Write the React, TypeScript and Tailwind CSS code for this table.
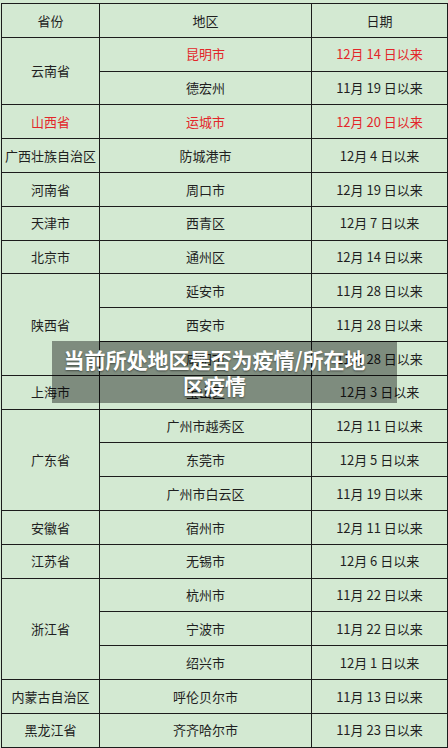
type Row = {
  province?: string;
  span?: number;
  provinceRed?: boolean;
  area: string;
  date: string;
  red?: boolean;
};

const ROWS: Row[] = [
  { province: "云南省", span: 2, area: "昆明市", date: "12月 14 日以来", red: true },
  { area: "德宏州", date: "11月 19 日以来" },
  { province: "山西省", provinceRed: true, area: "运城市", date: "12月 20 日以来", red: true },
  { province: "广西壮族自治区", area: "防城港市", date: "12月 4 日以来" },
  { province: "河南省", area: "周口市", date: "12月 19 日以来" },
  { province: "天津市", area: "西青区", date: "12月 7 日以来" },
  { province: "北京市", area: "通州区", date: "12月 14 日以来" },
  { province: "陕西省", span: 3, area: "延安市", date: "11月 28 日以来" },
  { area: "西安市", date: "11月 28 日以来" },
  { area: "咸阳市", date: "11月 28 日以来" },
  { province: "上海市", area: "宝山区", date: "12月 3 日以来" },
  { province: "广东省", span: 3, area: "广州市越秀区", date: "12月 11 日以来" },
  { area: "东莞市", date: "12月 5 日以来" },
  { area: "广州市白云区", date: "11月 19 日以来" },
  { province: "安徽省", area: "宿州市", date: "12月 11 日以来" },
  { province: "江苏省", area: "无锡市", date: "12月 6 日以来" },
  { province: "浙江省", span: 3, area: "杭州市", date: "11月 22 日以来" },
  { area: "宁波市", date: "11月 22 日以来" },
  { area: "绍兴市", date: "12月 1 日以来" },
  { province: "内蒙古自治区", area: "呼伦贝尔市", date: "11月 13 日以来" },
  { province: "黑龙江省", area: "齐齐哈尔市", date: "11月 23 日以来" },
];

const cell = "border border-[#1c1c1c] text-center align-middle p-0 whitespace-nowrap";

export default function App() {
  return (
    <div className="relative w-[448px] h-[748px] overflow-hidden bg-[#d3e9d2] font-['Microsoft_YaHei','Noto_Sans_CJK_SC',sans-serif] text-[13px] text-[#1f1f1f]">
      <table className="ml-[1px] mt-[3px] w-[446px] border-collapse table-fixed">
        <colgroup>
          <col className="w-[98px]" />
          <col className="w-[212px]" />
          <col className="w-[136px]" />
        </colgroup>
        <thead>
          <tr className="h-[33.8px]">
            <th className={`${cell} font-normal`}>省份</th>
            <th className={`${cell} font-normal`}>地区</th>
            <th className={`${cell} font-normal`}>日期</th>
          </tr>
        </thead>
        <tbody>
          {ROWS.map((r, i) => (
            <tr key={i} className="h-[33.8px]">
              {r.province && (
                <td
                  rowSpan={r.span ?? 1}
                  className={`${cell} ${r.provinceRed ? "text-[#e3262a]" : ""}`}
                >
                  {r.province}
                </td>
              )}
              <td className={`${cell} ${r.red ? "text-[#e3262a]" : ""}`}>{r.area}</td>
              <td className={`${cell} ${r.red ? "text-[#e3262a]" : ""}`}>{r.date}</td>
            </tr>
          ))}
        </tbody>
      </table>

      {/* title banner laid over the table */}
      <div className="absolute left-[52px] top-[341px] w-[345px] h-[62px] bg-black/40 flex items-center pl-[10px] pr-[30px]">
        <p className="w-full text-center text-white font-bold text-[21px] leading-[26px] font-['Noto_Sans_CJK_SC',sans-serif] [text-shadow:0_1px_2px_rgba(0,0,0,0.45)]">
          当前所处地区是否为疫情/所在地区疫情
        </p>
      </div>
    </div>
  );
}
